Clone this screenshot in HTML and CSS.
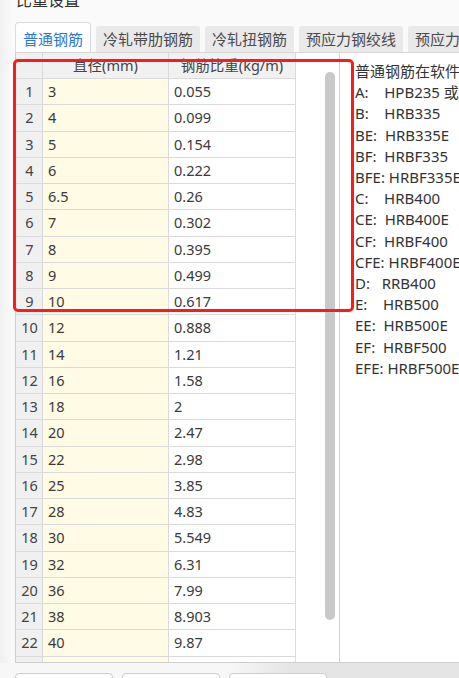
FILE: index.html
```html
<!DOCTYPE html>
<html lang="zh-CN">
<head>
<meta charset="utf-8">
<title>比重设置</title>
<link rel="stylesheet" href="styles.css">
</head>
<body>
<div class="page">
  <div class="title">比重设置</div>
  <div class="tabs">
    <div class="tab active">普通钢筋</div>
    <div class="tab">冷轧带肋钢筋</div>
    <div class="tab">冷轧扭钢筋</div>
    <div class="tab">预应力钢绞线</div>
    <div class="tab">预应力钢丝</div>
  </div>
  <div class="frame">
    <div class="tablearea">
      <div class="grid">
        <div class="row head"><div class="c num"></div><div class="c hd">直径(mm)</div><div class="c hd">钢筋比重(kg/m)</div></div>
        <div class="row"><div class="c num">1</div><div class="c dia">3</div><div class="c wt">0.055</div></div>
        <div class="row"><div class="c num">2</div><div class="c dia">4</div><div class="c wt">0.099</div></div>
        <div class="row"><div class="c num">3</div><div class="c dia">5</div><div class="c wt">0.154</div></div>
        <div class="row"><div class="c num">4</div><div class="c dia">6</div><div class="c wt">0.222</div></div>
        <div class="row"><div class="c num">5</div><div class="c dia">6.5</div><div class="c wt">0.26</div></div>
        <div class="row"><div class="c num">6</div><div class="c dia">7</div><div class="c wt">0.302</div></div>
        <div class="row"><div class="c num">7</div><div class="c dia">8</div><div class="c wt">0.395</div></div>
        <div class="row"><div class="c num">8</div><div class="c dia">9</div><div class="c wt">0.499</div></div>
        <div class="row"><div class="c num">9</div><div class="c dia">10</div><div class="c wt">0.617</div></div>
        <div class="row"><div class="c num">10</div><div class="c dia">12</div><div class="c wt">0.888</div></div>
        <div class="row"><div class="c num">11</div><div class="c dia">14</div><div class="c wt">1.21</div></div>
        <div class="row"><div class="c num">12</div><div class="c dia">16</div><div class="c wt">1.58</div></div>
        <div class="row"><div class="c num">13</div><div class="c dia">18</div><div class="c wt">2</div></div>
        <div class="row"><div class="c num">14</div><div class="c dia">20</div><div class="c wt">2.47</div></div>
        <div class="row"><div class="c num">15</div><div class="c dia">22</div><div class="c wt">2.98</div></div>
        <div class="row"><div class="c num">16</div><div class="c dia">25</div><div class="c wt">3.85</div></div>
        <div class="row"><div class="c num">17</div><div class="c dia">28</div><div class="c wt">4.83</div></div>
        <div class="row"><div class="c num">18</div><div class="c dia">30</div><div class="c wt">5.549</div></div>
        <div class="row"><div class="c num">19</div><div class="c dia">32</div><div class="c wt">6.31</div></div>
        <div class="row"><div class="c num">20</div><div class="c dia">36</div><div class="c wt">7.99</div></div>
        <div class="row"><div class="c num">21</div><div class="c dia">38</div><div class="c wt">8.903</div></div>
        <div class="row"><div class="c num">22</div><div class="c dia">40</div><div class="c wt">9.87</div></div>
        <div class="row"><div class="c num"></div><div class="c dia"></div><div class="c wt"></div></div>
      </div>
      <div class="scroll"><div class="thumb"></div></div>
    </div>
    <div class="notes">
      <div>普通钢筋在软件中的表示方法</div>
      <div>A:&nbsp;&nbsp;&nbsp;&nbsp;HPB235 或 HPB300</div>
      <div>B:&nbsp;&nbsp;&nbsp;&nbsp;HRB335</div>
      <div>BE:&nbsp;&nbsp;HRB335E</div>
      <div>BF:&nbsp;&nbsp;HRBF335</div>
      <div>BFE: HRBF335E</div>
      <div>C:&nbsp;&nbsp;&nbsp;&nbsp;HRB400</div>
      <div>CE:&nbsp;&nbsp;HRB400E</div>
      <div>CF:&nbsp;&nbsp;HRBF400</div>
      <div>CFE: HRBF400E</div>
      <div>D:&nbsp;&nbsp;&nbsp;RRB400</div>
      <div>E:&nbsp;&nbsp;&nbsp;&nbsp;HRB500</div>
      <div>EE:&nbsp;&nbsp;HRB500E</div>
      <div>EF:&nbsp;&nbsp;HRBF500</div>
      <div>EFE: HRBF500E</div>
    </div>
  </div>
  <div class="bottom">
    <div class="btn"></div>
    <div class="btn"></div>
    <div class="btn"></div>
  </div>
  <div class="highlight"></div>
</div>
</body>
</html>
```
FILE: styles.css
```css
html, body {
  margin: 0;
  padding: 0;
}
body {
  background: #f8f8f8;
  font-family: "Noto Sans", "Noto Sans CJK SC", sans-serif;
  color: #3a3a3a;
}
.page {
  position: relative;
  width: 459px;
  height: 678px;
  overflow: hidden;
  background: linear-gradient(to right, #f0f0f0 0px, #fafafa 12px, #fafafa 100%);
}
.title {
  height: 20px;
  line-height: 20px;
  margin-top: -11px;
  padding-left: 16px;
  font-size: 16px;
  color: #333;
  font-family: "Noto Sans CJK SC", sans-serif;
}
.tabs {
  display: flex;
  align-items: flex-end;
  gap: 5px;
  height: 30px;
  margin-top: 13px;
  padding-left: 15px;
  white-space: nowrap;
}
.tab {
  flex: none;
  height: 26px;
  line-height: 26px;
  padding: 0 7px;
  font-size: 15px;
  font-family: "Noto Sans CJK SC", sans-serif;
  color: #4a4a4a;
  background: #e9e9e9;
  border-radius: 3px 3px 0 0;
}
.tab.active {
  height: 30px;
  line-height: 31px;
  padding: 0 7px;
  box-sizing: border-box;
  color: #2a78d4;
  background: #fff;
  border: 1px solid #dcdcdc;
  border-bottom: none;
  border-radius: 4px 4px 0 0;
}
.frame {
  display: flex;
  margin-left: 15px;
  height: 611px;
  box-sizing: border-box;
  border-top: 1px solid #d6d6d6;
  border-left: 1px solid #cfcfcf;
  border-bottom: 1px solid #cfcfcf;
  background: #fff;
}
.tablearea {
  flex: none;
  display: flex;
  width: 324px;
  box-sizing: border-box;
  border-right: 1px solid #d2d2d2;
  overflow: hidden;
}
.grid {
  flex: none;
  width: 280px;
}
.row {
  display: grid;
  grid-template-columns: 27px 126px 127px;
  height: 26.25px;
}
.row.head {
  height: 26px;
}
.c {
  box-sizing: border-box;
  border-right: 1px solid #dadada;
  border-bottom: 1px solid #dadada;
  font-size: 14.5px;
  line-height: 25px;
  white-space: nowrap;
  overflow: hidden;
}
.num {
  background: #f0f0f0;
  text-align: center;
  color: #444;
  padding-left: 1px;
}
.hd {
  background: #f1f1f1;
  text-align: center;
  color: #444;
  font-family: "Noto Sans", "Noto Sans CJK SC", sans-serif;
}
.dia {
  background: #fffbe4;
  padding-left: 5px;
}
.wt {
  background: #fff;
  padding-left: 5px;
}
.scroll {
  flex: none;
  padding-top: 19px;
  margin-left: 29px;
}
.thumb {
  width: 10px;
  height: 548px;
  border-radius: 5px;
  background: #c9c9c9;
}
.notes {
  flex: 1;
  min-width: 0;
  overflow: hidden;
  white-space: nowrap;
  padding-top: 8px;
  padding-left: 15px;
  font-size: 15px;
  line-height: 21.2px;
  color: #333;
  font-family: "Noto Sans", "Noto Sans CJK SC", sans-serif;
}
.bottom {
  display: flex;
  gap: 9px;
  height: 15px;
  padding: 10px 0 0 15px;
  box-sizing: border-box;
  background: linear-gradient(to right, #f7f7f7 0px, #f7f7f7 230px, #e5e5e5 290px, #e5e5e5 100%);
}
.btn {
  flex: none;
  width: 98px;
  height: 20px;
  box-sizing: border-box;
  background: #fff;
  border: 1px solid #cdcdcd;
  border-radius: 4px;
}
.highlight {
  position: absolute;
  left: 13px;
  top: 59px;
  width: 341px;
  height: 253px;
  box-sizing: border-box;
  border: 3px solid #f81c1c;
  border-radius: 5px;
  pointer-events: none;
}
```
